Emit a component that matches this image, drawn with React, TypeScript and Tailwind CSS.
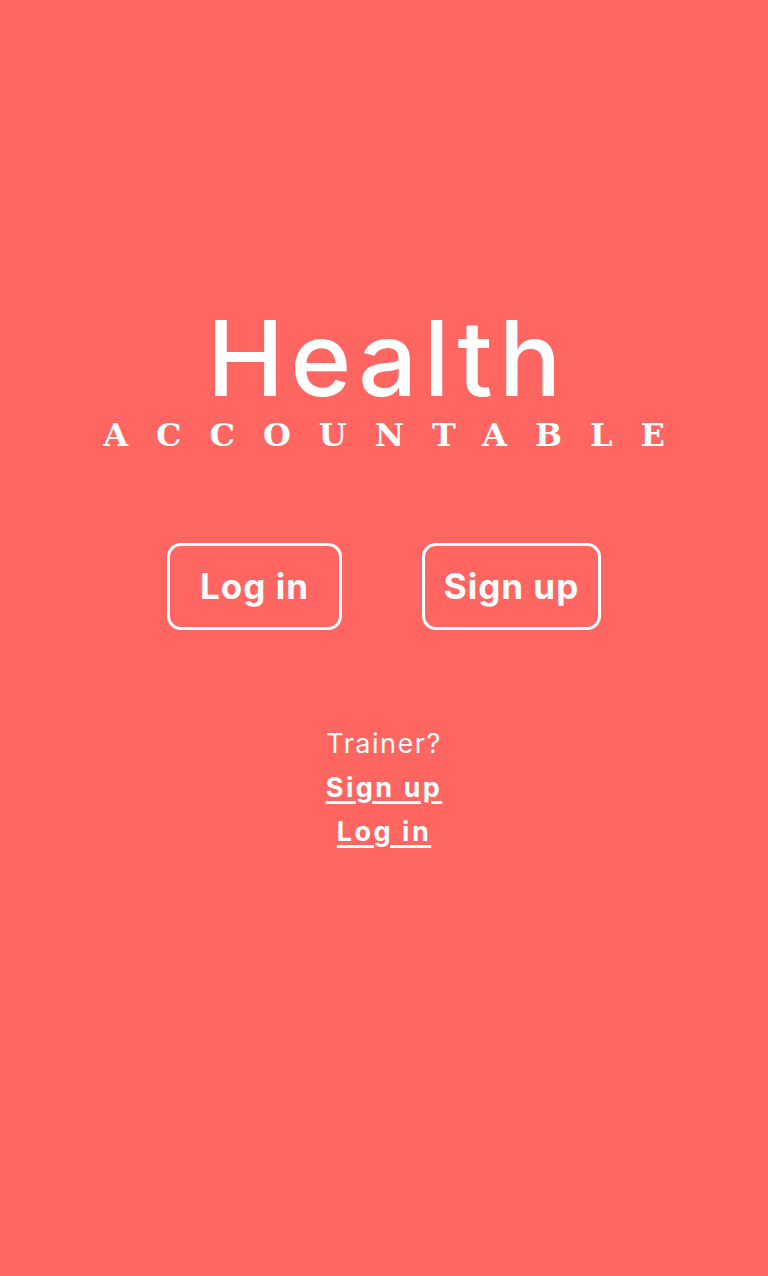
export default function App() {
  return (
    <div className="min-h-[1276px] w-full bg-[#ff6661] text-white flex flex-col items-center" style={{ fontFamily: 'Inter, "Noto Sans", sans-serif' }}>
      <div className="pt-[306px] flex flex-col items-center">
        <h1 className="text-[104px] leading-none font-medium tracking-[6px] pl-[6px]">Health</h1>
        <div className="mt-[9px] pl-[28px] text-[32px] leading-none font-bold tracking-[28px]" style={{ fontFamily: '"DejaVu Serif", "Liberation Serif", serif' }}>
          ACCOUNTABLE
        </div>
      </div>

      <div className="mt-[92px] flex gap-[80px]">
        <button className="w-[175px] h-[87px] border-[3px] border-white rounded-[14px] text-[35px] font-bold tracking-[1px]">Log in</button>
        <button className="w-[179px] h-[87px] border-[3px] border-white rounded-[14px] text-[35px] font-bold tracking-[1px]">Sign up</button>
      </div>

      <div className="mt-[92px] flex flex-col items-center text-[27px] leading-[44px]">
        <span className="tracking-[1.5px]">Trainer?</span>
        <a className="font-bold tracking-[2.5px] underline underline-offset-4 decoration-[3px]">Sign up</a>
        <a className="font-bold tracking-[2.5px] underline underline-offset-4 decoration-[3px]">Log in</a>
      </div>
    </div>
  )
}
